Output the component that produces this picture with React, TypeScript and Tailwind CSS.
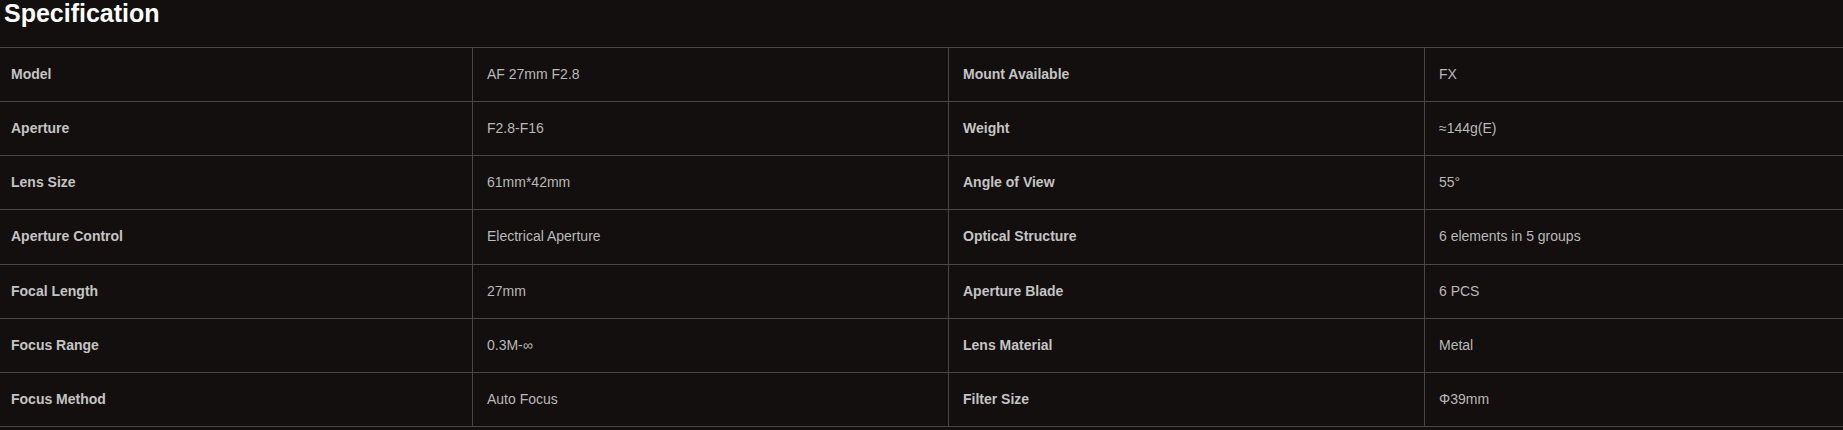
const specs: [string, string, string, string][] = [
  ["Model", "AF 27mm F2.8", "Mount Available", "FX"],
  ["Aperture", "F2.8-F16", "Weight", "≈144g(E)"],
  ["Lens Size", "61mm*42mm", "Angle of View", "55°"],
  ["Aperture Control", "Electrical Aperture", "Optical Structure", "6 elements in 5 groups"],
  ["Focal Length", "27mm", "Aperture Blade", "6 PCS"],
  ["Focus Range", "0.3M-∞", "Lens Material", "Metal"],
  ["Focus Method", "Auto Focus", "Filter Size", "Φ39mm"],
];

function SpecRow({ row }: { row: [string, string, string, string] }) {
  const [l1, v1, l2, v2] = row;
  return (
    <div className="grid grid-cols-[472px_476px_476px_1fr] h-[54.15px] border-b border-[#4a4746]">
      <div className="flex items-center pl-[11px] font-bold text-[#c4c4c4]">{l1}</div>
      <div className="flex items-center pl-[14px] border-l border-[#4a4746] text-[#b9b9b9]">{v1}</div>
      <div className="flex items-center pl-[14px] border-l border-[#4a4746] font-bold text-[#c4c4c4]">{l2}</div>
      <div className="flex items-center pl-[14px] border-l border-[#4a4746] text-[#b9b9b9]">{v2}</div>
    </div>
  );
}

export default function App() {
  return (
    <div className="w-[1843px] h-[430px] overflow-hidden bg-[#120f0e] font-['Liberation_Sans',Arial,sans-serif]">
      <div className="h-[47px] pl-[4px]">
        <h2 className="text-[25px] leading-[26px] font-bold text-white">Specification</h2>
      </div>
      <div className="border-t border-[#4a4746] text-[14px]">
        {specs.map((row) => (
          <SpecRow key={row[0]} row={row} />
        ))}
      </div>
    </div>
  );
}
